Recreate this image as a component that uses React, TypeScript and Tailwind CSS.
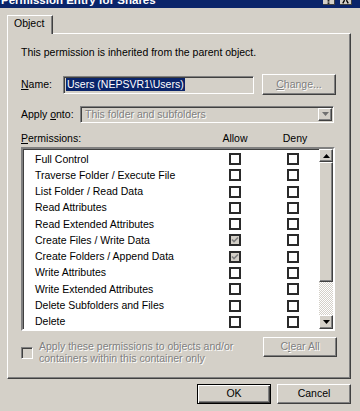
import React from "react";

const raised =
  "border border-t-white border-l-white border-r-[#404040] border-b-[#404040] shadow-[inset_-1px_-1px_0_#808080]";
const sunken =
  "border border-t-[#808080] border-l-[#808080] border-r-white border-b-white shadow-[inset_1px_1px_0_#404040,inset_-1px_-1px_0_#d4d0c8]";
const disabledText = "text-[#808080] [text-shadow:1px_1px_0_#ffffff]";

const permissions: [string, boolean][] = [
  ["Full Control", false],
  ["Traverse Folder / Execute File", false],
  ["List Folder / Read Data", false],
  ["Read Attributes", false],
  ["Read Extended Attributes", false],
  ["Create Files / Write Data", true],
  ["Create Folders / Append Data", true],
  ["Write Attributes", false],
  ["Write Extended Attributes", false],
  ["Delete Subfolders and Files", false],
  ["Delete", false],
];

function CheckBox({ checked }: { checked?: boolean }) {
  return (
    <div
      className={`w-[12px] h-[12px] border-2 border-[#2a2a2a] flex items-center justify-center ${
        checked ? "bg-[#d4d0c8]" : "bg-white"
      }`}
    >
      {checked && (
        <svg width="8" height="8" viewBox="0 0 8 8">
          <path d="M1 3.5 L3 5.5 L7 1.5" stroke="#808080" strokeWidth="1.6" fill="none" />
        </svg>
      )}
    </div>
  );
}

function Arrow({ dir, color = "#000" }: { dir: "up" | "down"; color?: string }) {
  return (
    <svg width="7" height="4" viewBox="0 0 7 4">
      {dir === "up" ? (
        <path d="M3.5 0 L7 4 L0 4 Z" fill={color} />
      ) : (
        <path d="M0 0 L7 0 L3.5 4 Z" fill={color} />
      )}
    </svg>
  );
}

export default function App() {
  return (
    <div className="w-[360px] h-[411px] bg-[#d4d0c8] overflow-hidden font-['Liberation_Sans',Arial,sans-serif] text-[10.5px] text-black">
      {/* title bar (cut off at top) */}
      <div className="h-[8px] bg-[#0a246a] flex overflow-hidden">
        <div className="flex-1 pl-[1px] -mt-[6px] leading-[12px] text-[11.5px] font-bold text-white whitespace-nowrap">
          Permission Entry for Shares
        </div>
        <div className="flex items-start gap-[5px] pr-[8px]">
          <div className="w-[12px] h-[5px] bg-[#d4d0c8] border-b border-r border-[#404040] flex justify-center">
            <svg width="12" height="4" viewBox="0 0 12 4">
              <rect x="5" y="0" width="2" height="1.5" fill="#000" />
              <rect x="5" y="2.5" width="2" height="1.5" fill="#000" />
            </svg>
          </div>
          <div className="w-[12px] h-[5px] bg-[#d4d0c8] border-b border-r border-[#404040] flex justify-center">
            <svg width="12" height="4" viewBox="0 0 12 4">
              <path d="M5 0 L3 3.5 M7 0 L9 3.5" stroke="#000" strokeWidth="1.5" />
            </svg>
          </div>
        </div>
      </div>

      {/* tab */}
      <div className="pl-[7px] mt-[7px]">
        <div className="relative z-10 -mb-[1px] w-[46px] h-[19px] bg-[#d4d0c8] border-t border-l border-r border-t-white border-l-white border-r-[#404040] shadow-[inset_-1px_0_0_#808080] pl-[6px] pt-[1px] leading-[13px]">
          Object
        </div>
      </div>

      {/* tab panel */}
      <div className="ml-[7px] w-[344px] h-[346px] border border-t-white border-l-white border-r-[#404040] border-b-[#404040] shadow-[inset_-1px_-1px_0_#808080] pl-[13px] pr-[13px] pt-[12px] flex flex-col">
        <div className="leading-[13px]">This permission is inherited from the parent object.</div>

        <div className="mt-[15px] h-[21px] flex items-center">
          <div className="w-[42px] leading-[13px]">
            <span className="underline">N</span>ame:
          </div>
          <div className={`w-[191px] h-[18px] ${sunken} bg-[#d4d0c8] flex items-center pl-[2px]`}>
            <span className="bg-[#0a246a] text-white leading-[13px] px-[1px]">Users (NEPSVR1\Users)</span>
          </div>
          <div className={`ml-[8px] w-[74px] h-[21px] ${raised} flex items-center justify-center ${disabledText}`}>
            <span>
              <span className="underline">C</span>hange...
            </span>
          </div>
        </div>

        <div className="mt-[10px] h-[18px] flex items-center">
          <div className="w-[59px] leading-[13px]">
            Apply <span className="underline">o</span>nto:
          </div>
          <div className={`w-[254px] h-[17px] ${sunken} bg-[#d4d0c8] flex items-center`}>
            <div className={`flex-1 pl-[4px] leading-[13px] ${disabledText}`}>This folder and subfolders</div>
            <div className={`w-[14px] h-[13px] mr-[1px] ${raised} bg-[#d4d0c8] flex items-center justify-center`}>
              <Arrow dir="down" color="#707070" />
            </div>
          </div>
        </div>

        <div className="mt-[9px] h-[13px] flex items-center leading-[13px]">
          <div className="flex-1">
            <span className="underline">P</span>ermissions:
          </div>
          <div className="w-[40px] text-center">Allow</div>
          <div className="ml-[20px] w-[40px] text-center">Deny</div>
          <div className="w-[22px]" />
        </div>

        <div className={`mt-[2px] w-[314px] h-[184px] border-2 border-t-[#808080] border-l-[#808080] border-r-white border-b-white shadow-[inset_1px_1px_0_#404040] bg-white flex`}>
          <div className="flex-1 pt-[2px] overflow-hidden">
            {permissions.map(([name, checked]) => (
              <div key={name} className="h-[16.27px] flex items-center pl-[12px] pr-[6px] leading-[13px]">
                <div className="flex-1 whitespace-nowrap">{name}</div>
                <div className="w-[40px] flex justify-center">
                  <CheckBox checked={checked} />
                </div>
                <div className="ml-[18px] w-[40px] flex justify-center">
                  <CheckBox />
                </div>
              </div>
            ))}
          </div>
          <div className="w-[14px] flex flex-col bg-[#d4d0c8]">
            <div className={`h-[13px] ${raised} flex items-center justify-center`}>
              <Arrow dir="up" />
            </div>
            <div className={`h-[120px] ${raised}`} />
            <div className="flex-1 bg-[repeating-conic-gradient(#ffffff_0_25%,#d4d0c8_0_50%)] bg-[length:2px_2px]" />
            <div className={`h-[14px] ${raised} flex items-center justify-center`}>
              <Arrow dir="down" />
            </div>
          </div>
        </div>

        <div className="mt-[6px] flex items-start">
          <div className={`mt-[10px] w-[12px] h-[12px] ${sunken} bg-[#d4d0c8]`} />
          <div className={`ml-[6px] mt-[3px] leading-[12px] ${disabledText}`}>
            Apply these permissions to objects and/or
            <br />
            containers within this container only
          </div>
          <div className={`ml-auto w-[74px] h-[20px] ${raised} flex items-center justify-center ${disabledText}`}>
            <span>
              C<span className="underline">l</span>ear All
            </span>
          </div>
        </div>
      </div>

      {/* dialog buttons */}
      <div className="mt-[5px] flex justify-end gap-[6px] pr-[9px]">
        <div className="w-[74px] h-[20px] border border-black shadow-[inset_1px_1px_0_#ffffff,inset_-1px_-1px_0_#404040,inset_-2px_-2px_0_#808080] flex items-center justify-center">
          OK
        </div>
        <div className={`w-[74px] h-[20px] ${raised} flex items-center justify-center`}>Cancel</div>
      </div>
    </div>
  );
}
